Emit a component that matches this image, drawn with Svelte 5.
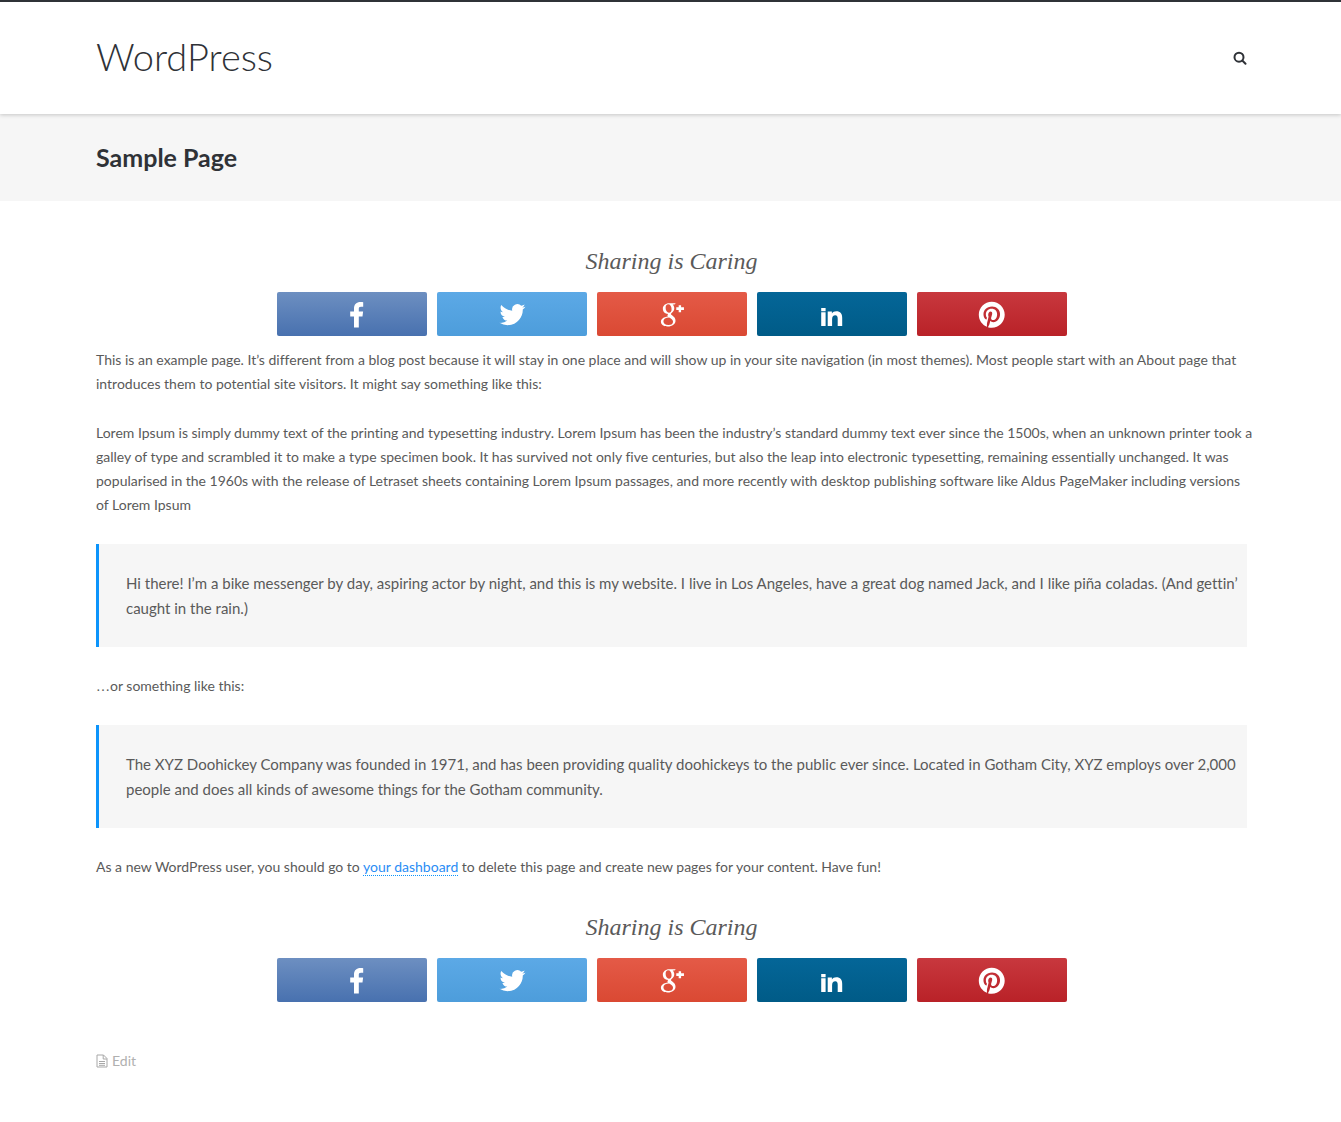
<script>
  const networks = [
    { id: 'facebook', label: 'Share on Facebook' },
    { id: 'twitter', label: 'Share on Twitter' },
    { id: 'google', label: 'Share on Google+' },
    { id: 'linkedin', label: 'Share on LinkedIn' },
    { id: 'pinterest', label: 'Share on Pinterest' }
  ];
</script>

{#snippet icon(id)}
  <svg class="glyph" viewBox="0 0 28 28" aria-hidden="true">
    {#if id === 'facebook'}
      <path transform="translate(4 .6)" d="M12 27V15.800H8.200v-4.900H12V8c0-4.300 2.600-6.600 6.500-6.600 1.100 0 2.100.1 2.700.2v4.500h-2.200c-1.800 0-2.200.9-2.200 2.200v2.600h4.300l-.6 4.900h-3.700V27z" />
    {:else if id === 'twitter'}
      <path transform="translate(1.500 1.700) scale(1.080)" d="M23.953 4.570a10 10 0 01-2.825.775 4.958 4.958 0 002.163-2.723c-.951.555-2.005.959-3.127 1.184a4.920 4.920 0 00-8.384 4.482C7.690 8.095 4.067 6.130 1.640 3.162a4.822 4.822 0 00-.666 2.475c0 1.710.87 3.213 2.188 4.096a4.904 4.904 0 01-2.228-.616v.06a4.923 4.923 0 003.946 4.827 4.996 4.996 0 01-2.212.085 4.936 4.936 0 004.604 3.417 9.867 9.867 0 01-6.102 2.105c-.39 0-.779-.023-1.170-.067a13.995 13.995 0 007.557 2.209c9.053 0 13.998-7.496 13.998-13.985 0-.21 0-.42-.015-.63A9.935 9.935 0 0024 4.590z" />
    {:else if id === 'google'}
      <path transform="translate(1 1.300) scale(.96)" fill-rule="evenodd" d="M17.500 2H10.600C6.800 2 4 4.500 4 7.700c0 3.100 2.200 5.300 5.500 5.400-.8 1-.9 2-.3 3C5 16.200 2 18.300 2 21.300 2 24.400 5 26.200 9 26.200c5 0 8.200-2.600 8.200-6 0-2.400-1.100-3.900-3.300-5.500-1.600-1.200-2-1.700-.5-2.900 1.700-1.300 2.500-2.600 2.500-4.500 0-1.700-.6-3-1.700-4h1.900zM9.600 3.200c2 0 3.500 2.200 3.500 5 0 2.200-.9 3.600-2.700 3.600-2 0-3.500-2.300-3.500-4.900 0-2.200.9-3.700 2.700-3.700zM10.600 17c2.600 1.600 4 2.400 4 4.300 0 2-1.500 3.500-4.800 3.500-3.200 0-5.200-1.500-5.200-3.900 0-2.500 2.300-3.900 6-3.900zM20.500 4h2.500v2.300H26v2.700h-3V11.500h-2.500V9H18V6.300h2.500z" />
    {:else if id === 'linkedin'}
      <path d="M3.200 12.300h4.400V26H3.200zM3.200 8h4.400v3.200H3.200zM9.700 11.600h4.200v2c.9-1.500 2.300-2.300 4.400-2.300 4.100 0 5.900 2.500 5.900 6.600V26h-4.500v-7.200c0-2.200-.6-3.500-2.400-3.500-2.100 0-3.200 1.400-3.200 3.900V26H9.700z" />
    {:else}
      <path transform="translate(.8 1.800) scale(1.080)" d="M12 0C5.373 0 0 5.372 0 12c0 5.084 3.163 9.426 7.627 11.174-.105-.949-.2-2.405.042-3.441.218-.937 1.407-5.965 1.407-5.965s-.359-.719-.359-1.782c0-1.668.967-2.914 2.171-2.914 1.023 0 1.518.769 1.518 1.690 0 1.029-.655 2.568-.994 3.995-.283 1.194.599 2.169 1.777 2.169 2.133 0 3.772-2.249 3.772-5.495 0-2.873-2.064-4.882-5.012-4.882-3.414 0-5.418 2.561-5.418 5.207 0 1.031.397 2.138.893 2.738.098.119.112.224.083.345l-.333 1.360c-.053.22-.174.267-.402.161-1.499-.698-2.436-2.889-2.436-4.649 0-3.785 2.750-7.262 7.929-7.262 4.163 0 7.398 2.967 7.398 6.931 0 4.136-2.607 7.464-6.227 7.464-1.216 0-2.359-.631-2.750-1.378l-.748 2.853c-.271 1.043-1.002 2.350-1.492 3.146 1.124.347 2.317.535 3.554.535 6.627 0 12-5.373 12-12S18.627 0 12 0z" />
    {/if}
  </svg>
{/snippet}

{#snippet share()}
  <section class="share">
    <h3>Sharing is Caring</h3>
    <div class="buttons">
      {#each networks as n}
        <a class="btn {n.id}" href="#{n.id}" aria-label={n.label}>{@render icon(n.id)}</a>
      {/each}
    </div>
  </section>
{/snippet}

<header class="site">
  <div class="wrap bar">
    <a class="brand" href="#home">WordPress</a>
    <button class="search" aria-label="Search">
      <svg viewBox="0 0 14 14" aria-hidden="true">
        <circle cx="6" cy="6.200" r="4.500" />
        <path d="M9.300 9.500l3.200 3.200" />
      </svg>
    </button>
  </div>
</header>

<div class="band">
  <div class="wrap"><h1>Sample Page</h1></div>
</div>

<main class="wrap">
  {@render share()}
  <p>This is an example page. It’s different from a blog post because it will stay in one place and will show up in your site navigation (in most themes). Most people start with an About page that introduces them to potential site visitors. It might say something like this:</p>
  <p>Lorem Ipsum is simply dummy text of the printing and typesetting industry. Lorem Ipsum has been the industry’s standard dummy text ever since the 1500s, when an unknown printer took a galley of type and scrambled it to make a type specimen book. It has survived not only five centuries, but also the leap into electronic typesetting, remaining essentially unchanged. It was popularised in the 1960s with the release of Letraset sheets containing Lorem Ipsum passages, and more recently with desktop publishing software like Aldus PageMaker including versions of Lorem Ipsum</p>
  <blockquote>Hi there! I’m a bike messenger by day, aspiring actor by night, and this is my website. I live in Los Angeles, have a great dog named Jack, and I like piña coladas. (And gettin’ caught in the rain.)</blockquote>
  <p><span class="dots">…</span>or something like this:</p>
  <blockquote>The XYZ Doohickey Company was founded in 1971, and has been providing quality doohickeys to the public ever since. Located in Gotham City, XYZ employs over 2,000 people and does all kinds of awesome things for the Gotham community.</blockquote>
  <p>As a new WordPress user, you should go to <a class="link" href="#dashboard">your dashboard</a> to delete this page and create new pages for your content. Have fun!</p>
  {@render share()}
  <a class="edit" href="#edit">
    <svg viewBox="0 0 12 14" aria-hidden="true">
      <path d="M1 1h6.500L11 4.500V13H1zM7.200 1v4H11M3 7.500h6M3 9.500h6M3 11.300h6" />
    </svg>
    Edit
  </a>
</main>

<style>
  :global(body) {
    background: #fff;
    color: #5a5a5a;
    font: 14px/24px Lato, 'Liberation Sans', sans-serif;
    font-variant-ligatures: none;
  }
  .wrap {
    box-sizing: border-box;
    max-width: 1191px;
    margin: 0 auto;
    padding: 0 19px 0 21px;
  }
  .site {
    position: relative;
    border-top: 2px solid #2f3237;
    background: #fff;
    box-shadow: 0 1px 4px rgba(0, 0, 0, 0.2);
  }
  .bar {
    display: flex;
    align-items: center;
    justify-content: space-between;
    min-height: 112px;
  }
  .brand {
    padding-bottom: 4px;
    color: #2f3237;
    font-size: 38px;
    line-height: 48px;
    font-weight: 300;
    text-decoration: none;
  }
  .search {
    display: flex;
    padding: 0;
    border: 0;
    background: none;
  }
  .search svg {
    width: 14px;
    height: 14px;
    fill: none;
    stroke: #2f3237;
    stroke-width: 2;
    stroke-linecap: round;
  }
  .band {
    background: #f6f6f6;
    padding: 27px 0 28px;
  }
  h1 {
    margin: 0;
    color: #2f3237;
    font-size: 25px;
    line-height: 32px;
    font-weight: 700;
  }
  main {
    display: flow-root;
  }
  .share {
    padding-top: 40px;
    margin-bottom: 12px;
    text-align: center;
  }
  h3 {
    margin: 0 0 11px;
    font: italic 400 24px/40px 'Liberation Serif', serif;
  }
  p + .share {
    padding-top: 3px;
  }
  .buttons {
    display: flex;
    flex-wrap: wrap;
    justify-content: center;
    gap: 10px;
  }
  .btn {
    display: flex;
    align-items: center;
    justify-content: center;
    width: 150px;
    height: 44px;
    border-radius: 2px;
  }
  .glyph {
    width: 28px;
    height: 28px;
    fill: #fff;
  }
  .facebook { background: linear-gradient(#6d8fc1, #4871af); }
  .twitter { background: linear-gradient(#5ca9e6, #4d9ddb); }
  .google { background: linear-gradient(#e45a47, #da4933); }
  .linkedin { background: linear-gradient(#046698, #005b87); }
  .pinterest { background: linear-gradient(#c8383e, #b92228); }
  p {
    margin: 0 -8px 25px 0;
  }
  .dots {
    font-family: 'Liberation Serif', serif;
    line-height: 1;
  }
  blockquote {
    margin: 27px 0;
    padding: 27px 4px 26px 27px;
    border-left: 3px solid #0c94fb;
    background: #f6f6f6;
    font-size: 15px;
    line-height: 25px;
  }
  .link {
    color: #2a8df5;
    text-decoration: none;
    border-bottom: 1px dotted #0c94fb;
  }
  .edit {
    display: flex;
    align-items: center;
    gap: 4px;
    width: max-content;
    margin: 47px 0 49px;
    color: #b0b0b0;
    text-decoration: none;
  }
  .edit svg {
    width: 12px;
    height: 14px;
    fill: none;
    stroke: #a8a8a8;
  }
</style>
